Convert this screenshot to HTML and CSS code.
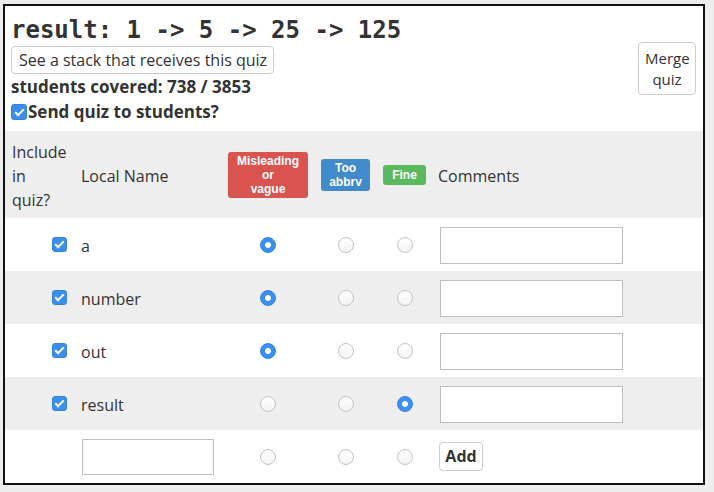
FILE: index.html
```html
<!DOCTYPE html>
<html>
<head>
<meta charset="utf-8">
<link rel="stylesheet" href="styles.css">
</head>
<body>
<div class="frame">
  <div class="top">
    <div class="info">
      <h1 class="title">result: 1 -&gt; 5 -&gt; 25 -&gt; 125</h1>
      <button class="btn btn-stack">See a stack that receives this quiz</button>
      <div class="line">students covered: 738 / 3853</div>
      <label class="line send"><input type="checkbox" class="cb cb-send" checked>Send quiz to students?</label>
    </div>
    <button class="btn btn-merge">Merge quiz</button>
  </div>
  <div class="grid">
    <div class="row head">
      <div class="c c1 t"><span class="words">Include in quiz?</span></div>
      <div class="c c2 t">Local Name</div>
      <div class="c cm"><span class="badge red">Misleading<br>or<br>vague</span></div>
      <div class="c cm"><span class="badge blue">Too<br>abbrv</span></div>
      <div class="c cm"><span class="badge green">Fine</span></div>
      <div class="c c6 t">Comments</div>
    </div>
    <div class="row">
      <div class="c c1 cbcell"><input type="checkbox" class="cb" checked></div>
      <div class="c c2 t">a</div>
      <div class="c cm"><input type="radio" class="rd" name="r1" checked></div>
      <div class="c cm"><input type="radio" class="rd" name="r1"></div>
      <div class="c cm"><input type="radio" class="rd" name="r1"></div>
      <div class="c c6"><input type="text" class="comment"></div>
    </div>
    <div class="row alt">
      <div class="c c1 cbcell"><input type="checkbox" class="cb" checked></div>
      <div class="c c2 t">number</div>
      <div class="c cm"><input type="radio" class="rd" name="r2" checked></div>
      <div class="c cm"><input type="radio" class="rd" name="r2"></div>
      <div class="c cm"><input type="radio" class="rd" name="r2"></div>
      <div class="c c6"><input type="text" class="comment"></div>
    </div>
    <div class="row">
      <div class="c c1 cbcell"><input type="checkbox" class="cb" checked></div>
      <div class="c c2 t">out</div>
      <div class="c cm"><input type="radio" class="rd" name="r3" checked></div>
      <div class="c cm"><input type="radio" class="rd" name="r3"></div>
      <div class="c cm"><input type="radio" class="rd" name="r3"></div>
      <div class="c c6"><input type="text" class="comment"></div>
    </div>
    <div class="row alt">
      <div class="c c1 cbcell"><input type="checkbox" class="cb" checked></div>
      <div class="c c2 t">result</div>
      <div class="c cm"><input type="radio" class="rd" name="r4"></div>
      <div class="c cm"><input type="radio" class="rd" name="r4"></div>
      <div class="c cm"><input type="radio" class="rd" name="r4" checked></div>
      <div class="c c6"><input type="text" class="comment"></div>
    </div>
    <div class="row last">
      <div class="c c1"></div>
      <div class="c c2"><input type="text" class="newname"></div>
      <div class="c cm"><input type="radio" class="rd" name="r5"></div>
      <div class="c cm"><input type="radio" class="rd" name="r5"></div>
      <div class="c cm"><input type="radio" class="rd" name="r5"></div>
      <div class="c c6"><button class="btn btn-add">Add</button></div>
    </div>
  </div>
</div>
</body>
</html>
```

FILE: styles.css
```css
html, body {
  margin: 0;
  padding: 0;
  background: #ededed;
}
body {
  font-family: "Open Sans", "Liberation Sans", sans-serif;
  font-size: 16px;
  line-height: 24px;
  color: #333;
}
.frame {
  margin: 4px 0 0 3px;
  width: 702px;
  box-sizing: border-box;
  border: 2px solid #111;
  background: #fff;
}
.top {
  display: flex;
  align-items: flex-start;
  justify-content: space-between;
}
.info {
  padding: 0 0 7px 6px;
  display: flex;
  flex-direction: column;
  align-items: flex-start;
}
.title {
  margin: 10px 0 0 0;
  font-family: "DejaVu Sans Mono", "Liberation Mono", monospace;
  font-weight: bold;
  font-size: 24px;
  line-height: 28px;
  color: #333;
}
.btn {
  font-family: "Open Sans", "Liberation Sans", sans-serif;
  color: #333;
  background: #fff;
  border: 1px solid #ccc;
  border-radius: 4px;
  cursor: pointer;
}
.btn-stack {
  margin-top: 2px;
  height: 28px;
  box-sizing: border-box;
  padding: 0 6px 0 7px;
  font-size: 16px;
  line-height: 26px;
}
.line {
  font-weight: bold;
  font-size: 17px;
  margin-top: 1px;
}
.send {
  margin-top: 1px;
  display: flex;
  align-items: center;
}
.btn-merge {
  margin: 36px 7px 0 0;
  width: 58px;
  height: 53px;
  box-sizing: border-box;
  padding: 0 6px;
  font-size: 15px;
  line-height: 21px;
}
.grid {
  display: flex;
  flex-direction: column;
}
.row {
  display: grid;
  grid-template-columns: 70px 147px 92px 63px 55px 1fr;
  align-items: center;
  height: 53px;
}
.row.head {
  height: 87px;
  background: #eee;
}
.row.alt {
  background: #eee;
}
.c {
  box-sizing: border-box;
}
.t {
  padding-top: 3px;
}
.words {
  display: block;
  width: min-content;
}
.c1 {
  padding-left: 7px;
}
.cbcell {
  display: flex;
  justify-content: flex-end;
  padding-right: 8px;
}
.c2 {
  padding-left: 6px;
}
.cm {
  display: flex;
  justify-content: center;
}
.c6 {
  padding-left: 6px;
  display: flex;
  align-items: center;
}
.badge {
  display: inline-block;
  padding: 2px 8px;
  font-family: "Liberation Sans", "Open Sans", sans-serif;
  font-size: 12px;
  line-height: 14px;
  font-weight: bold;
  color: #fff;
  text-align: center;
  border-radius: 3px;
}
.red { background: #d9534f; padding-left: 9px; padding-right: 9px; }
.blue { background: #428bca; }
.green { background: #5cb85c; padding: 3px 9px; }

.cb {
  appearance: none;
  -webkit-appearance: none;
  position: relative;
  margin: 0;
  width: 15px;
  height: 15px;
  border-radius: 3px;
  background: #3b8eea;
  border: 1px solid #3583dd;
  box-sizing: border-box;
}
.cb::after {
  content: "";
  position: absolute;
  left: 4px;
  top: 1px;
  width: 3px;
  height: 7px;
  border-right: 2px solid #fff;
  border-bottom: 2px solid #fff;
  transform: rotate(45deg);
}
.cb-send {
  width: 16px;
  height: 16px;
  margin-right: 1px;
}
.cb-send::after {
  left: 4.5px;
  top: 1.5px;
}
.rd {
  appearance: none;
  -webkit-appearance: none;
  margin: 0;
  width: 16px;
  height: 16px;
  border-radius: 50%;
  box-sizing: border-box;
  border: 1px solid #c2c2c2;
  background: linear-gradient(#ffffff, #f3f3f3);
}
.rd:checked {
  border: 1px solid #2f82e6;
  background: radial-gradient(circle, #fff 0 2.6px, #3b8ff2 3.2px);
}
.comment {
  margin: 1px 0 0 2px;
  width: 183px;
  height: 37px;
  box-sizing: border-box;
  border: 1px solid #bdbdbd;
  background: #fff;
  font-size: 16px;
}
.newname {
  margin: 1px 0 0 1px;
  width: 132px;
  height: 36px;
  box-sizing: border-box;
  border: 1px solid #bdbdbd;
  background: #fff;
  font-size: 16px;
}
.btn-add {
  margin-left: 1px;
  width: 44px;
  height: 29px;
  box-sizing: border-box;
  padding: 0;
  font-weight: bold;
  font-size: 16px;
  line-height: 27px;
}
```
